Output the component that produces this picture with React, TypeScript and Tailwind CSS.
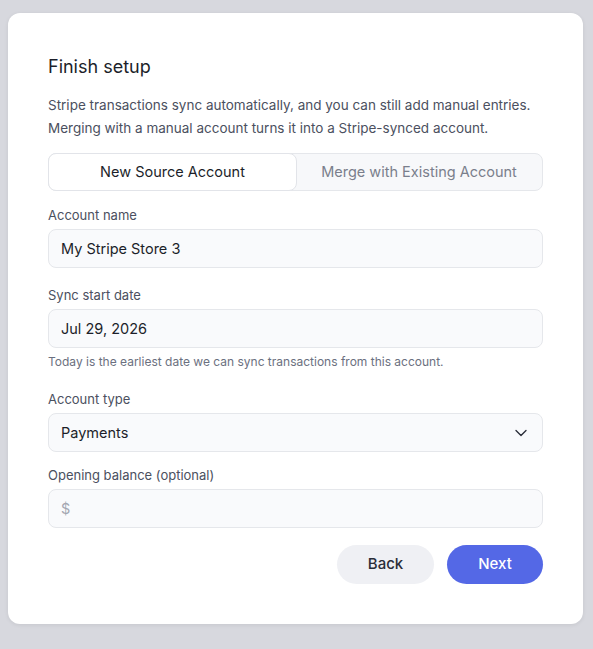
import { ChevronDown } from "lucide-react";

const font = { fontFamily: "Inter, 'Noto Sans', sans-serif" };

function Label({ text }: { text: string }) {
  return <div className="text-[13px] leading-[16px] text-[#4b5060] mb-[6px]">{text}</div>;
}

const box =
  "h-[39px] rounded-[8px] border border-[#e5e7eb] bg-[#f9fafc] px-[12px] flex items-center text-[14.5px]";

export default function App() {
  return (
    <div className="min-h-[649px] w-full bg-[#d7d8de] pt-[13px] px-[8px]" style={font}>
      <div className="w-[575px] h-[611px] bg-white rounded-[12px] shadow-[0_1px_4px_rgba(0,0,0,0.08)] px-[40px] pt-[42px]">
        <h1 className="text-[18px] leading-[24px] text-[#1c1f2a] font-normal">Finish setup</h1>
        <p className="mt-[15px] text-[13.5px] leading-[23px] text-[#4b5060] whitespace-nowrap">
          Stripe transactions sync automatically, and you can still add manual entries.
          <br />
          Merging with a manual account turns it into a Stripe-synced account.
        </p>

        <div className="mt-[13px] flex h-[38px] rounded-[8px] border border-[#e5e7eb] bg-[#f7f8fa]">
          <button className="w-[249px] -m-px h-[38px] rounded-[8px] border border-[#e2e4e9] bg-white text-[14.5px] text-[#1c1f2a]">
            New Source Account
          </button>
          <button className="flex-1 text-[14.5px] text-[#7a7f8c]">Merge with Existing Account</button>
        </div>

        <div className="mt-[16px]">
          <Label text="Account name" />
          <div className={`${box} text-[#1c1f2a]`}>My Stripe Store 3</div>
        </div>

        <div className="mt-[19px]">
          <Label text="Sync start date" />
          <div className={`${box} text-[#1c1f2a]`}>Jul 29, 2026</div>
          <div className="mt-[7px] text-[12px] leading-[14px] text-[#6b7080] whitespace-nowrap">
            Today is the earliest date we can sync transactions from this account.
          </div>
        </div>

        <div className="mt-[22px]">
          <Label text="Account type" />
          <div className={`${box} justify-between text-[#1c1f2a] pr-[11px]`}>
            <span>Payments</span>
            <ChevronDown size={20} strokeWidth={1.6} className="text-[#2a2d38]" />
          </div>
        </div>

        <div className="mt-[15px]">
          <Label text="Opening balance (optional)" />
          <div className={`${box} text-[#a3a7b2]`}>$</div>
        </div>

        <div className="mt-[17px] flex justify-end gap-[13px]">
          <button className="w-[97px] h-[39px] rounded-full bg-[#eff0f4] text-[15px] font-medium text-[#2a2d38]">
            Back
          </button>
          <button className="w-[96px] h-[39px] rounded-full bg-[#5468e6] text-[15px] font-medium text-white">
            Next
          </button>
        </div>
      </div>
    </div>
  );
}
